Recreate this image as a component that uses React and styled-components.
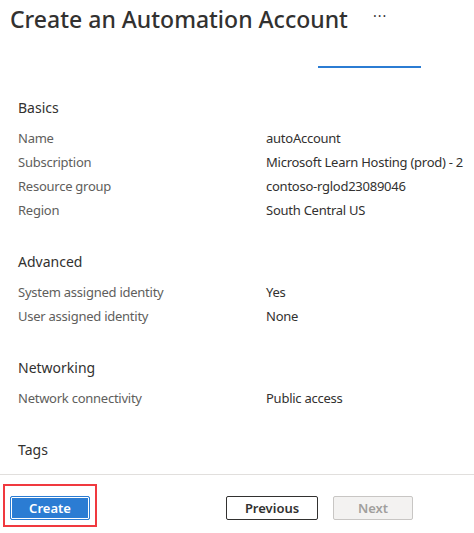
import React from 'react';
import styled, { createGlobalStyle } from 'styled-components';

const GlobalStyle = createGlobalStyle`
  body {
    margin: 0;
    background: #fff;
    font-family: "Segoe UI", "Noto Sans", sans-serif;
    color: #323130;
  }
`;

const Page = styled.div`
  width: 474px;
  height: 533px;
  overflow: hidden;
  display: flex;
  flex-direction: column;
`;

const Header = styled.header`
  display: flex;
  align-items: center;
  padding: 2px 0 0 10px;
  height: 34px;
`;

const Title = styled.h1`
  margin: 0;
  font-size: 23px;
  font-weight: 500;
  line-height: 32px;
  white-space: nowrap;
`;

const More = styled.span`
  margin-left: 25px;
  font-size: 14px;
  color: #323130;
  letter-spacing: 1px;
  line-height: 1;
  padding-bottom: 6px;
`;

const TabBar = styled.div`
  height: 32px;
  display: flex;
  align-items: flex-end;
  padding-left: 318px;
`;

const ActiveTab = styled.div`
  width: 103px;
  height: 2px;
  background: #2b7cd3;
`;

const Summary = styled.main`
  padding: 30px 0 0 18px;
  display: flex;
  flex-direction: column;
  gap: 30px;
  flex: 1;
`;

const Section = styled.section`
  display: flex;
  flex-direction: column;
  gap: 8px;
`;

const SectionTitle = styled.h2`
  margin: 0;
  font-size: 14px;
  font-weight: 400;
  line-height: 20px;
  color: #323130;
`;

const Rows = styled.dl`
  margin: 0;
  display: grid;
  grid-template-columns: 248px 1fr;
  grid-auto-rows: 24px;
  align-items: center;
  font-size: 13px;
  letter-spacing: -0.25px;
`;

const Label = styled.dt`
  color: #605e5c;
  white-space: nowrap;
`;

const Value = styled.dd`
  margin: 0;
  color: #323130;
  white-space: nowrap;
`;

const Footer = styled.footer`
  border-top: 1px solid #e1dfdd;
  height: 59px;
  box-sizing: border-box;
  display: flex;
  align-items: flex-start;
  padding: 9px 0 0 3px;
`;

const Highlight = styled.div`
  border: 2px solid #f0393f;
  padding: 10px 5px 5px 5px;
  display: flex;
`;

const Button = styled.button`
  box-sizing: border-box;
  height: 24px;
  width: ${({ $width }) => $width}px;
  margin-left: ${({ $gap }) => $gap || 0}px;
  margin-top: ${({ $top }) => $top || 0}px;
  font-family: inherit;
  font-size: 13px;
  font-weight: 600;
  padding: 0;
  border-radius: 2px;
  cursor: pointer;
  border: 1px solid
    ${({ $variant }) =>
      $variant === 'primary' ? '#2b7cd3' : $variant === 'disabled' ? '#c8c6c4' : '#323130'};
  background: ${({ $variant }) =>
    $variant === 'primary' ? '#2b7cd3' : $variant === 'disabled' ? '#f3f2f1' : '#fff'};
  color: ${({ $variant }) =>
    $variant === 'primary' ? '#fff' : $variant === 'disabled' ? '#a19f9d' : '#323130'};
  box-shadow: ${({ $variant }) => ($variant === 'primary' ? 'inset 0 0 0 1px #fff' : 'none')};
`;

const sections = [
  {
    title: 'Basics',
    rows: [
      ['Name', 'autoAccount'],
      ['Subscription', 'Microsoft Learn Hosting (prod) - 2'],
      ['Resource group', 'contoso-rglod23089046'],
      ['Region', 'South Central US'],
    ],
  },
  {
    title: 'Advanced',
    rows: [
      ['System assigned identity', 'Yes'],
      ['User assigned identity', 'None'],
    ],
  },
  {
    title: 'Networking',
    rows: [['Network connectivity', 'Public access']],
  },
  { title: 'Tags', rows: [] },
];

export default function App() {
  return (
    <>
      <GlobalStyle />
      <Page>
        <Header>
          <Title>Create an Automation Account</Title>
          <More>···</More>
        </Header>
        <TabBar>
          <ActiveTab />
        </TabBar>
        <Summary>
          {sections.map((s) => (
            <Section key={s.title}>
              <SectionTitle>{s.title}</SectionTitle>
              {s.rows.length > 0 && (
                <Rows>
                  {s.rows.map(([k, v]) => (
                    <React.Fragment key={k}>
                      <Label>{k}</Label>
                      <Value>{v}</Value>
                    </React.Fragment>
                  ))}
                </Rows>
              )}
            </Section>
          ))}
        </Summary>
        <Footer>
          <Highlight>
            <Button $variant="primary" $width={80}>Create</Button>
          </Highlight>
          <Button $width={92} $gap={129} $top={12}>Previous</Button>
          <Button $variant="disabled" $width={80} $gap={15} $top={12} disabled>
            Next
          </Button>
        </Footer>
      </Page>
    </>
  );
}
